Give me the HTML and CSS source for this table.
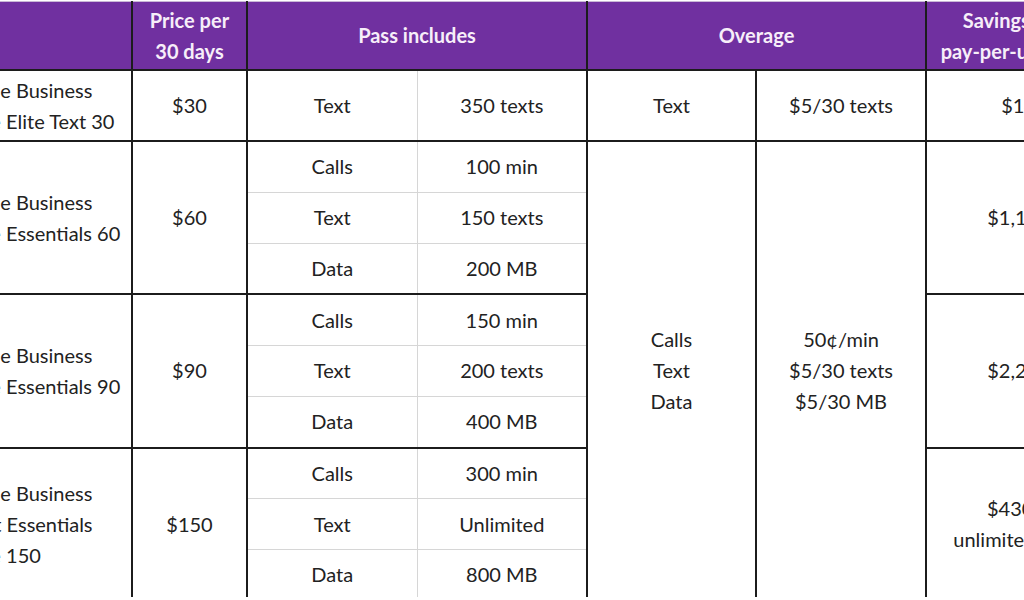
FILE: index.html
```html
<!DOCTYPE html>
<html lang="en">
<head>
<meta charset="utf-8">
<title>Business pass plans</title>
<link rel="stylesheet" href="styles.css">
</head>
<body>
<div class="frame">
<table class="plans">
  <colgroup>
    <col class="c-plan">
    <col class="c-price">
    <col class="c-pass">
    <col class="c-pass">
    <col class="c-over1">
    <col class="c-over2">
    <col class="c-save">
  </colgroup>
  <thead>
    <tr>
      <th class="plan-h">Plan</th>
      <th>Price per<br>30 days</th>
      <th colspan="2">Pass includes</th>
      <th colspan="2">Overage</th>
      <th>Savings over<br>pay-per-use rates</th>
    </tr>
  </thead>
  <tbody>
    <tr class="single">
      <td class="plan">Mobile Business<br>Prime Elite Text 30</td>
      <td>$30</td>
      <td class="pk">Text</td>
      <td class="pv">350 texts</td>
      <td>Text</td>
      <td>$5/30 texts</td>
      <td>$14</td>
    </tr>

    <tr class="sub sub-a">
      <td class="plan" rowspan="3">Mobile Business<br>Prime Essentials 60</td>
      <td rowspan="3">$60</td>
      <td class="pk">Calls</td>
      <td class="pv">100 min</td>
      <td rowspan="9">Calls<br>Text<br>Data</td>
      <td rowspan="9">50¢/min<br>$5/30 texts<br>$5/30 MB</td>
      <td rowspan="3">$1,176</td>
    </tr>
    <tr class="sub sub-b">
      <td class="pk">Text</td>
      <td class="pv">150 texts</td>
    </tr>
    <tr class="sub sub-c">
      <td class="pk">Data</td>
      <td class="pv">200 MB</td>
    </tr>

    <tr class="sub sub-a">
      <td class="plan" rowspan="3">Mobile Business<br>Prime Essentials 90</td>
      <td rowspan="3">$90</td>
      <td class="pk">Calls</td>
      <td class="pv">150 min</td>
      <td rowspan="3">$2,256</td>
    </tr>
    <tr class="sub sub-b">
      <td class="pk">Text</td>
      <td class="pv">200 texts</td>
    </tr>
    <tr class="sub sub-c">
      <td class="pk">Data</td>
      <td class="pv">400 MB</td>
    </tr>

    <tr class="sub sub-a">
      <td class="plan" rowspan="3">Mobile Business<br>Smart Essentials<br>Prime 150</td>
      <td rowspan="3">$150</td>
      <td class="pk">Calls</td>
      <td class="pv">300 min</td>
      <td rowspan="3">$430 +<br>unlimited texts</td>
    </tr>
    <tr class="sub sub-b">
      <td class="pk">Text</td>
      <td class="pv">Unlimited</td>
    </tr>
    <tr class="sub sub-c">
      <td class="pk">Data</td>
      <td class="pv">800 MB</td>
    </tr>
  </tbody>
</table>
</div>
</body>
</html>
```
FILE: styles.css
```css
html, body {
  margin: 0;
  padding: 0;
  background: #ffffff;
}

.frame {
  width: 1024px;
  height: 597px;
  overflow: hidden;
  padding-top: 1px;
  box-sizing: border-box;
}

.plans {
  border-collapse: collapse;
  table-layout: fixed;
  width: 1179px;
  margin-left: -69px;
  font-family: "Lato", "Liberation Sans", sans-serif;
  font-size: 20px;
  line-height: 31px;
  color: #222222;
}

.c-plan { width: 200px; }
.c-price { width: 115px; }
.c-pass { width: 170px; }
.c-over1 { width: 169px; }
.c-over2 { width: 170px; }
.c-save { width: 185px; }

.plans th,
.plans td {
  padding: 0;
  text-align: center;
  vertical-align: middle;
  border: 2px solid #1c1c1c;
  white-space: nowrap;
  overflow: hidden;
}

.plans th {
  background: #7030a0;
  color: #f7eef9;
  font-weight: 700;
  height: 67px;
  border-top: 1px solid #c9b8d6;
}

.plans th.plan-h {
  color: #7030a0;
}

.plans td.plan {
  text-align: left;
  padding-left: 17px;
}

.single td {
  height: 69px;
}

.sub td {
  height: 49.75px;
}

.plans td.pk {
  border-right: 1px solid #d6d6d6;
}

.plans td.pv {
  border-left: 1px solid #d6d6d6;
}

.sub-a td.pk,
.sub-a td.pv {
  border-bottom: 1px solid #d6d6d6;
}

.sub-b td.pk,
.sub-b td.pv {
  border-top: 1px solid #d6d6d6;
  border-bottom: 1px solid #d6d6d6;
}

.sub-c td.pk,
.sub-c td.pv {
  border-top: 1px solid #d6d6d6;
}
```
